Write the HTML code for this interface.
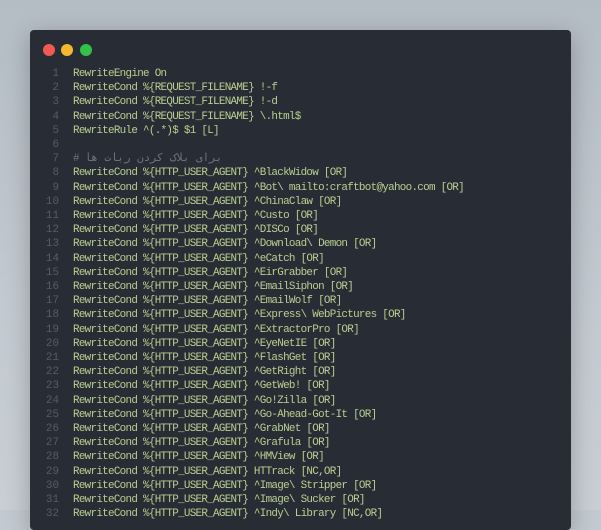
<!DOCTYPE html>
<html><head><style>
html,body{margin:0;padding:0;background:#c2c9d0}
body{width:601px;height:510px;overflow:hidden;background:linear-gradient(180deg,#b4bcc4 0%,#c2c9d0 60%,#c8ced4 100%);position:relative;font-family:"Liberation Mono","DejaVu Sans Mono",monospace}
.win{position:absolute;left:30px;top:30px;width:541px;height:500px;background:#282d35;border-radius:4px;box-shadow:0 6px 24px rgba(0,0,0,.25)}
.dot{position:absolute;top:14px;width:12px;height:12px;border-radius:50%}
.code{position:absolute;left:0;top:37px;font-size:10.9px;letter-spacing:-0.7px;line-height:14.2px;white-space:pre}
.ln{display:inline-block;width:29px;text-align:right;color:#565c66;margin-right:14px;letter-spacing:0}
.t{color:#b8d091}
.c{color:#6d737c}
</style></head><body>
<div class="win">
<div class="dot" style="left:13px;background:#f05a52"></div>
<div class="dot" style="left:31px;background:#f5b92e"></div>
<div class="dot" style="left:50px;background:#33c048"></div>
<div class="code"><span class="ln">1</span><span class="t">RewriteEngine On</span>
<span class="ln">2</span><span class="t">RewriteCond %{REQUEST_FILENAME} !-f</span>
<span class="ln">3</span><span class="t">RewriteCond %{REQUEST_FILENAME} !-d</span>
<span class="ln">4</span><span class="t">RewriteCond %{REQUEST_FILENAME} \.html$</span>
<span class="ln">5</span><span class="t">RewriteRule ^(.*)$ $1 [L]</span>
<span class="ln">6</span>
<span class="ln">7</span><span class="c"># برای بلاک کردن ربات ها</span>
<span class="ln">8</span><span class="t">RewriteCond %{HTTP_USER_AGENT} ^BlackWidow [OR]</span>
<span class="ln">9</span><span class="t">RewriteCond %{HTTP_USER_AGENT} ^Bot\ mailto:craftbot@yahoo.com [OR]</span>
<span class="ln">10</span><span class="t">RewriteCond %{HTTP_USER_AGENT} ^ChinaClaw [OR]</span>
<span class="ln">11</span><span class="t">RewriteCond %{HTTP_USER_AGENT} ^Custo [OR]</span>
<span class="ln">12</span><span class="t">RewriteCond %{HTTP_USER_AGENT} ^DISCo [OR]</span>
<span class="ln">13</span><span class="t">RewriteCond %{HTTP_USER_AGENT} ^Download\ Demon [OR]</span>
<span class="ln">14</span><span class="t">RewriteCond %{HTTP_USER_AGENT} ^eCatch [OR]</span>
<span class="ln">15</span><span class="t">RewriteCond %{HTTP_USER_AGENT} ^EirGrabber [OR]</span>
<span class="ln">16</span><span class="t">RewriteCond %{HTTP_USER_AGENT} ^EmailSiphon [OR]</span>
<span class="ln">17</span><span class="t">RewriteCond %{HTTP_USER_AGENT} ^EmailWolf [OR]</span>
<span class="ln">18</span><span class="t">RewriteCond %{HTTP_USER_AGENT} ^Express\ WebPictures [OR]</span>
<span class="ln">19</span><span class="t">RewriteCond %{HTTP_USER_AGENT} ^ExtractorPro [OR]</span>
<span class="ln">20</span><span class="t">RewriteCond %{HTTP_USER_AGENT} ^EyeNetIE [OR]</span>
<span class="ln">21</span><span class="t">RewriteCond %{HTTP_USER_AGENT} ^FlashGet [OR]</span>
<span class="ln">22</span><span class="t">RewriteCond %{HTTP_USER_AGENT} ^GetRight [OR]</span>
<span class="ln">23</span><span class="t">RewriteCond %{HTTP_USER_AGENT} ^GetWeb! [OR]</span>
<span class="ln">24</span><span class="t">RewriteCond %{HTTP_USER_AGENT} ^Go!Zilla [OR]</span>
<span class="ln">25</span><span class="t">RewriteCond %{HTTP_USER_AGENT} ^Go-Ahead-Got-It [OR]</span>
<span class="ln">26</span><span class="t">RewriteCond %{HTTP_USER_AGENT} ^GrabNet [OR]</span>
<span class="ln">27</span><span class="t">RewriteCond %{HTTP_USER_AGENT} ^Grafula [OR]</span>
<span class="ln">28</span><span class="t">RewriteCond %{HTTP_USER_AGENT} ^HMView [OR]</span>
<span class="ln">29</span><span class="t">RewriteCond %{HTTP_USER_AGENT} HTTrack [NC,OR]</span>
<span class="ln">30</span><span class="t">RewriteCond %{HTTP_USER_AGENT} ^Image\ Stripper [OR]</span>
<span class="ln">31</span><span class="t">RewriteCond %{HTTP_USER_AGENT} ^Image\ Sucker [OR]</span>
<span class="ln">32</span><span class="t">RewriteCond %{HTTP_USER_AGENT} ^Indy\ Library [NC,OR]</span></div>
</div>
</body></html>
